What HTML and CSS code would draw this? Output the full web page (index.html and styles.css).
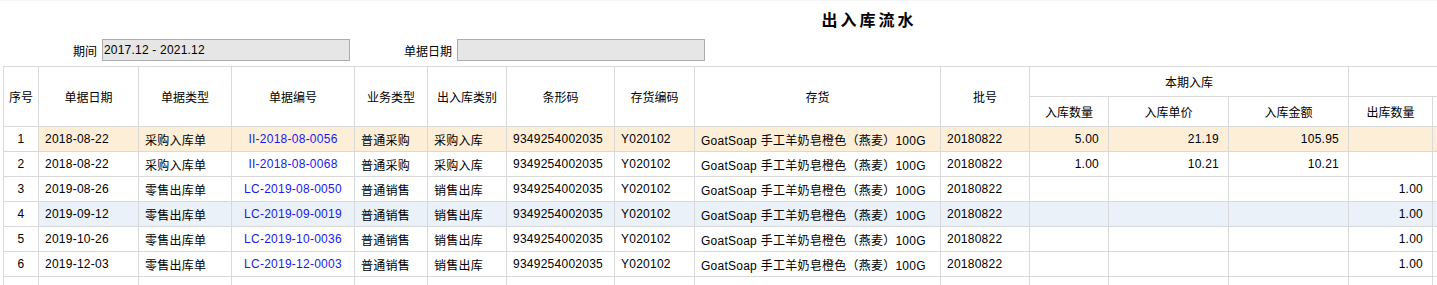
FILE: index.html
```html
<!DOCTYPE html>
<html lang="zh-CN">
<head>
<meta charset="utf-8">
<title>出入库流水</title>
<link rel="stylesheet" href="styles.css">
</head>
<body>
<div class="report">
  <h1 class="title">出入库流水</h1>
  <div class="filters">
    <div class="field">
      <span class="label">期间</span>
      <input class="input" type="text" value="2017.12 - 2021.12" readonly>
    </div>
    <div class="field">
      <span class="label label-wide">单据日期</span>
      <input class="input" type="text" value="" readonly>
    </div>
  </div>
  <table class="grid">
    <colgroup>
      <col class="c-seq"><col class="c-date"><col class="c-type"><col class="c-no"><col class="c-biz"><col class="c-io"><col class="c-bar"><col class="c-code"><col class="c-item"><col class="c-batch"><col class="c-inq"><col class="c-inp"><col class="c-inm"><col class="c-outq"><col class="c-outp"><col class="c-outm">
    </colgroup>
    <thead>
      <tr class="hrow">
        <th rowspan="2">序号</th>
        <th rowspan="2">单据日期</th>
        <th rowspan="2">单据类型</th>
        <th rowspan="2">单据编号</th>
        <th rowspan="2">业务类型</th>
        <th rowspan="2">出入库类别</th>
        <th rowspan="2">条形码</th>
        <th rowspan="2">存货编码</th>
        <th rowspan="2">存货</th>
        <th rowspan="2">批号</th>
        <th colspan="3">本期入库</th>
        <th colspan="3"></th>
      </tr>
      <tr class="hrow">
        <th>入库数量</th>
        <th>入库单价</th>
        <th>入库金额</th>
        <th>出库数量</th>
        <th></th>
        <th></th>
      </tr>
    </thead>
    <tbody>
      <tr class="row row-active">
        <td class="seq">1</td><td>2018-08-22</td><td>采购入库单</td><td class="link">II-2018-08-0056</td><td>普通采购</td><td>采购入库</td><td>9349254002035</td><td>Y020102</td><td>GoatSoap 手工羊奶皂橙色（燕麦）100G</td><td>20180822</td><td class="num">5.00</td><td class="num">21.19</td><td class="num">105.95</td><td class="num"></td><td class="num"></td><td class="num"></td>
      </tr>
      <tr class="row">
        <td class="seq">2</td><td>2018-08-22</td><td>采购入库单</td><td class="link">II-2018-08-0068</td><td>普通采购</td><td>采购入库</td><td>9349254002035</td><td>Y020102</td><td>GoatSoap 手工羊奶皂橙色（燕麦）100G</td><td>20180822</td><td class="num">1.00</td><td class="num">10.21</td><td class="num">10.21</td><td class="num"></td><td class="num"></td><td class="num"></td>
      </tr>
      <tr class="row">
        <td class="seq">3</td><td>2019-08-26</td><td>零售出库单</td><td class="link">LC-2019-08-0050</td><td>普通销售</td><td>销售出库</td><td>9349254002035</td><td>Y020102</td><td>GoatSoap 手工羊奶皂橙色（燕麦）100G</td><td>20180822</td><td class="num"></td><td class="num"></td><td class="num"></td><td class="num">1.00</td><td class="num"></td><td class="num"></td>
      </tr>
      <tr class="row row-hover">
        <td class="seq">4</td><td>2019-09-12</td><td>零售出库单</td><td class="link">LC-2019-09-0019</td><td>普通销售</td><td>销售出库</td><td>9349254002035</td><td>Y020102</td><td>GoatSoap 手工羊奶皂橙色（燕麦）100G</td><td>20180822</td><td class="num"></td><td class="num"></td><td class="num"></td><td class="num">1.00</td><td class="num"></td><td class="num"></td>
      </tr>
      <tr class="row">
        <td class="seq">5</td><td>2019-10-26</td><td>零售出库单</td><td class="link">LC-2019-10-0036</td><td>普通销售</td><td>销售出库</td><td>9349254002035</td><td>Y020102</td><td>GoatSoap 手工羊奶皂橙色（燕麦）100G</td><td>20180822</td><td class="num"></td><td class="num"></td><td class="num"></td><td class="num">1.00</td><td class="num"></td><td class="num"></td>
      </tr>
      <tr class="row">
        <td class="seq">6</td><td>2019-12-03</td><td>零售出库单</td><td class="link">LC-2019-12-0003</td><td>普通销售</td><td>销售出库</td><td>9349254002035</td><td>Y020102</td><td>GoatSoap 手工羊奶皂橙色（燕麦）100G</td><td>20180822</td><td class="num"></td><td class="num"></td><td class="num"></td><td class="num">1.00</td><td class="num"></td><td class="num"></td>
      </tr>
      <tr class="row">
        <td class="seq"></td><td></td><td></td><td></td><td></td><td></td><td></td><td></td><td></td><td></td><td class="num"></td><td class="num"></td><td class="num"></td><td class="num"></td><td class="num"></td><td class="num"></td>
      </tr>
    </tbody>
  </table>
</div>
</body>
</html>
```

FILE: styles.css
```css
html, body {
  margin: 0;
  padding: 0;
  overflow: hidden;
  background: #ffffff;
}

body {
  border-top: 1px solid #f4f4f4;
  font-family: "Liberation Sans", "Noto Sans CJK SC", sans-serif;
  font-size: 12px;
  color: #000000;
}

.report {
  display: inline-block;
  padding-left: 3px;
  width: 1732px;
}

.title {
  margin: 0;
  height: 38px;
  line-height: 37px;
  text-align: center;
  font-size: 16px;
  font-weight: bold;
  letter-spacing: 3px;
  font-family: "Noto Sans CJK SC", sans-serif;
}

.filters {
  display: flex;
  align-items: center;
  height: 22px;
  margin-left: -3px;
}

.field {
  display: flex;
  align-items: center;
}

.label {
  box-sizing: border-box;
  width: 102px;
  padding-right: 5px;
  text-align: right;
  font-family: "Noto Sans CJK SC", sans-serif;
  font-size: 12px;
}

.label-wide {
  width: 107px;
}

.input {
  box-sizing: border-box;
  width: 248px;
  height: 22px;
  margin: 0;
  padding: 0 0 0 1px;
  border: 1px solid #acacac;
  background: #e6e6e6;
  font-family: "Liberation Sans", "Noto Sans CJK SC", sans-serif;
  font-size: 12px;
  letter-spacing: 0.2px;
  color: #000000;
  outline: none;
}

.grid {
  margin-top: 5px;
  border-collapse: collapse;
  table-layout: fixed;
  width: 1729px;
}

.c-seq { width: 35px; }
.c-date { width: 100px; }
.c-type { width: 93px; }
.c-no { width: 123px; }
.c-biz { width: 73px; }
.c-io { width: 79px; }
.c-bar { width: 108px; }
.c-code { width: 80px; }
.c-item { width: 246px; }
.c-batch { width: 89px; }
.c-inq { width: 79px; }
.c-inp { width: 120px; }
.c-inm { width: 120px; }
.c-outq { width: 84px; }
.c-outp { width: 150px; }
.c-outm { width: 150px; }

.grid th,
.grid td {
  border: 1px solid #d9d9d9;
  white-space: nowrap;
  overflow: hidden;
}

.grid th {
  padding: 0;
  font-weight: normal;
  text-align: center;
  vertical-align: middle;
  font-family: "Noto Sans CJK SC", sans-serif;
}

.hrow {
  height: 30px;
}

.row {
  height: 25px;
}

.grid td {
  padding: 0 6px;
  letter-spacing: 0.25px;
  vertical-align: middle;
}

.grid td.seq {
  text-align: center;
  padding: 0;
  background: #ffffff;
}

.grid td.link {
  text-align: center;
  color: #1a1aee;
}

.grid td.num {
  text-align: right;
  padding-right: 9px;
}

.row-active td {
  background: #fdeed8;
}

.row-hover td {
  background: #eaf1f9;
}
```
